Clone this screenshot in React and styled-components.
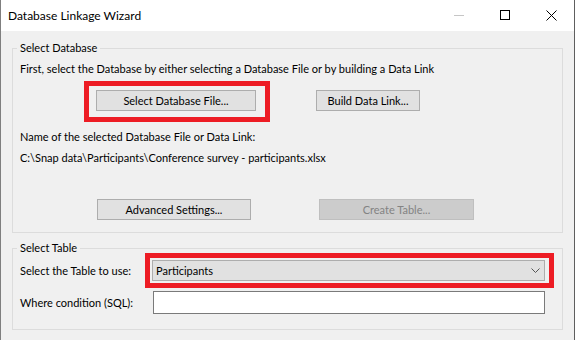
import React from "react";
import styled, { createGlobalStyle } from "styled-components";

const GlobalStyle = createGlobalStyle`
  html, body {
    margin: 0;
    padding: 0;
    background: #ffffff;
  }
  body {
    font-family: Lato, "Noto Sans", sans-serif;
    font-size: 11px;
    color: #000000;
  }
`;

export default function App() {
  return (
    <>
      <GlobalStyle />
      <Window>
        <TitleBar>
          <Title>Database Linkage Wizard</Title>
          <Captions>
            <CaptionButton>
              <svg width="10" height="10" viewBox="0 0 10 10">
                <line x1="0" y1="5.5" x2="10" y2="5.5" stroke="#c6c6c6" />
              </svg>
            </CaptionButton>
            <CaptionButton>
              <svg width="10" height="10" viewBox="0 0 10 10">
                <rect x="0.5" y="0.5" width="9" height="9" fill="none" stroke="#000" />
              </svg>
            </CaptionButton>
            <CaptionButton>
              <svg width="11" height="11" viewBox="0 0 11 11">
                <path d="M0.5 0.5 L10.5 10.5 M10.5 0.5 L0.5 10.5" stroke="#000" />
              </svg>
            </CaptionButton>
          </Captions>
        </TitleBar>

        <Body>
          <GroupBox>
            <Legend>Select Database</Legend>
            <GroupContent $pad="7px 7px 12px 7px">
              <Line>
                First, select the Database by either selecting a Database File or by building a Data Link
              </Line>
              <ButtonRow $top={14} $left={76} $gap={60}>
                <Highlight $inset="-9px -14px -11px -12px">
                  <Button $w={160}>Select Database File...</Button>
                </Highlight>
                <Button $w={104}>Build Data Link...</Button>
              </ButtonRow>
              <Line $top={19}>Name of the selected Database File or Data Link:</Line>
              <Line $top={7}>C:\Snap data\Participants\Conference survey - participants.xlsx</Line>
              <ButtonRow $top={34} $left={77} $gap={68}>
                <Button $w={154}>Advanced Settings...</Button>
                <Button $w={155} disabled>
                  Create Table...
                </Button>
              </ButtonRow>
            </GroupContent>
          </GroupBox>

          <GroupBox $top={8}>
            <Legend>Select Table</Legend>
            <GroupContent $pad="5px 7px 15px 7px">
              <FieldGrid>
                <FieldLabel>Select the Table to use:</FieldLabel>
                <Highlight $inset="-7px -9px -7px -7px">
                  <Combo>
                    <span>Participants</span>
                    <svg width="9" height="5" viewBox="0 0 9 5">
                      <polyline points="0.5,0.5 4.5,4.5 8.5,0.5" fill="none" stroke="#555" />
                    </svg>
                  </Combo>
                </Highlight>
                <FieldLabel>Where condition (SQL):</FieldLabel>
                <TextInput type="text" />
              </FieldGrid>
            </GroupContent>
          </GroupBox>
        </Body>
      </Window>
    </>
  );
}

const Window = styled.div`
  width: 575px;
  height: 340px;
  box-sizing: border-box;
  border-left: 1px solid #7f7f7f;
  border-right: 1px solid #5e5e5e;
  display: flex;
  flex-direction: column;
  overflow: hidden;
`;

const TitleBar = styled.div`
  height: 31px;
  flex-shrink: 0;
  display: flex;
  align-items: flex-start;
  background: #ffffff;
`;

const Title = styled.div`
  padding-left: 7px;
  line-height: 31px;
  font-size: 12px;
`;

const Captions = styled.div`
  margin-left: auto;
  display: flex;
`;

const CaptionButton = styled.div`
  width: 46px;
  height: 30px;
  display: flex;
  align-items: center;
  justify-content: center;
`;

const Body = styled.div`
  flex: 1;
  background: #f0f0f0;
  padding: 10px 11px 0 11px;
`;

const GroupBox = styled.fieldset`
  margin: ${(p) => p.$top || 0}px 0 0 0;
  padding: 0;
  min-width: 0;
  border: 1px solid #dcdcdc;
`;

const Legend = styled.legend`
  margin-left: 4px;
  padding: 0 3px;
  line-height: 14px;
`;

const GroupContent = styled.div`
  padding: ${(p) => p.$pad};
`;

const Line = styled.div`
  margin-top: ${(p) => p.$top || 0}px;
  line-height: 14px;
  white-space: nowrap;
`;

const ButtonRow = styled.div`
  margin-top: ${(p) => p.$top}px;
  padding-left: ${(p) => p.$left}px;
  display: flex;
  gap: ${(p) => p.$gap}px;
`;

const Highlight = styled.div`
  position: relative;
  display: flex;
  &::after {
    content: "";
    position: absolute;
    inset: ${(p) => p.$inset};
    border: 5px solid #ed1c24;
    pointer-events: none;
  }
`;

const Button = styled.button`
  width: ${(p) => p.$w}px;
  height: 21px;
  box-sizing: border-box;
  padding: 0;
  border: 1px solid #adadad;
  background: #e1e1e1;
  font-family: inherit;
  font-size: 11px;
  color: #000000;
  &:disabled {
    background: #cccccc;
    border-color: #bfbfbf;
    color: #838383;
  }
`;

const FieldGrid = styled.div`
  display: grid;
  grid-template-columns: 132px 393px;
  grid-template-rows: 21px 23px;
  row-gap: 10px;
  align-items: center;
`;

const FieldLabel = styled.div`
  line-height: 14px;
  white-space: nowrap;
`;

const Combo = styled.div`
  width: 393px;
  height: 21px;
  box-sizing: border-box;
  border: 1px solid #adadad;
  background: #e1e1e1;
  display: flex;
  align-items: center;
  justify-content: space-between;
  padding: 0 4px 0 3px;
`;

const TextInput = styled.input`
  width: 392px;
  height: 23px;
  box-sizing: border-box;
  margin: 0 0 0 1px;
  border: 1px solid #7a7a7a;
  background: #ffffff;
  outline: none;
`;
